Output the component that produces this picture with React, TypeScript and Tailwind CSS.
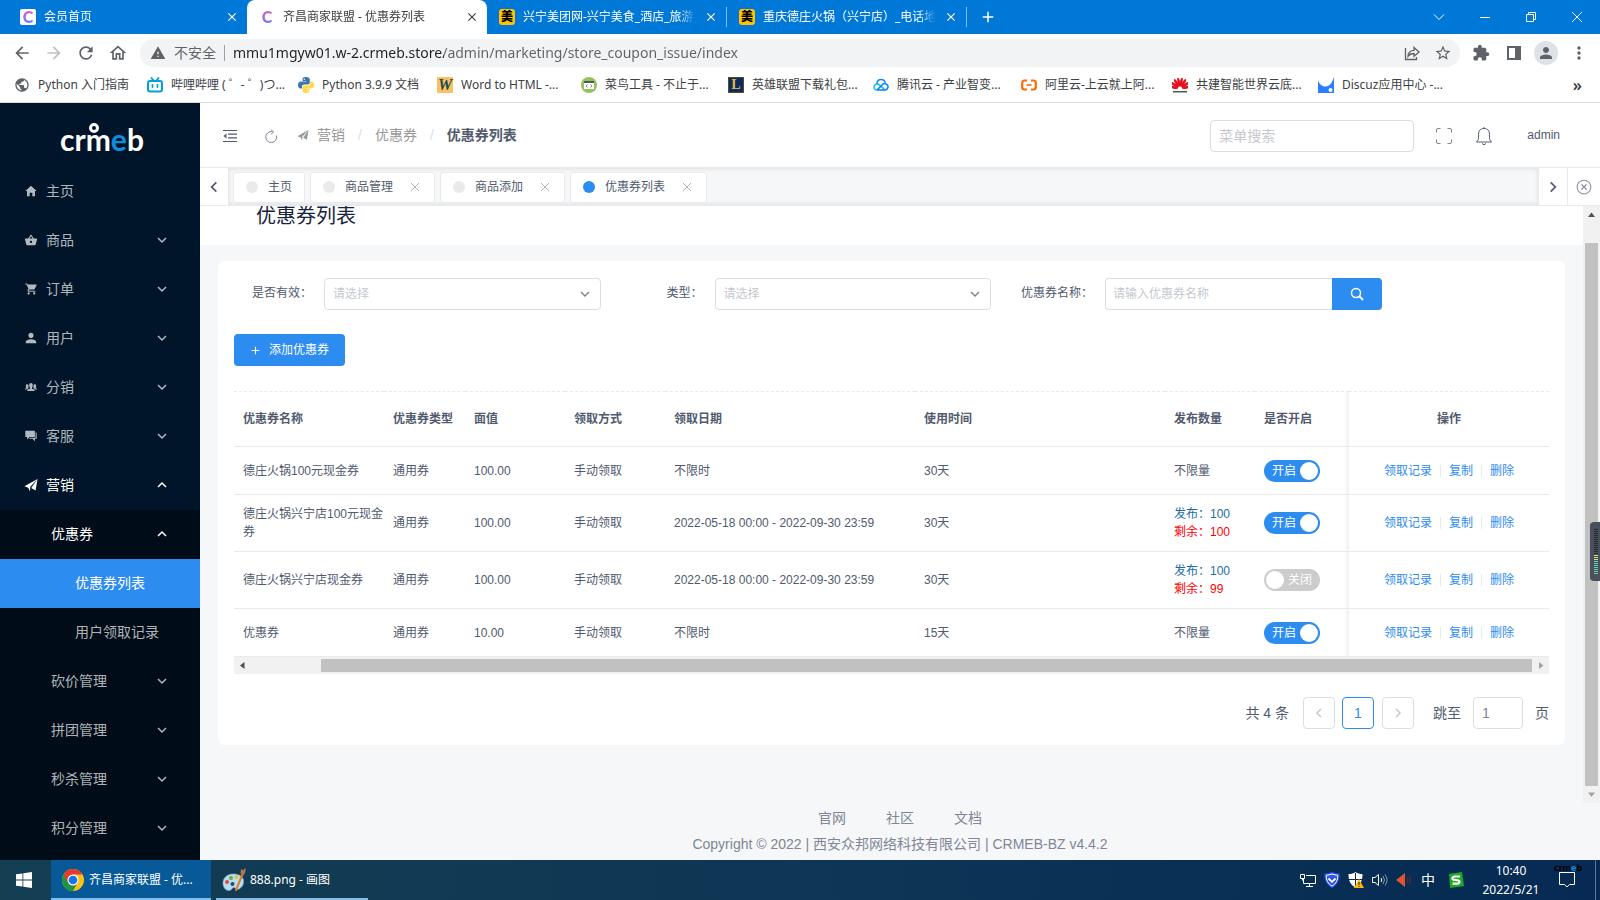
import { ReactNode, useState } from "react";
import {
  IoIosCloseCircleOutline,
  IoIosPeople,
  IoMdBasket,
  IoMdCart,
  IoMdHome,
  IoMdPerson,
  IoMdChatboxes,
} from "react-icons/io";
import {
  MdArrowBack,
  MdArrowForward,
  MdClose,
  MdExtension,
  MdMoreVert,
  MdOutlineHome,
  MdPerson,
  MdPublic,
  MdRefresh,
  MdStarBorder,
  MdWarning,
  MdAdd,
} from "react-icons/md";

/* ---------- small drawings ---------- */

const chevrons = {
  down: "M2 4l4 4 4-4",
  up: "M2 8l4-4 4 4",
  left: "M8 2L4 6l4 4",
  right: "M4 2l4 4-4 4",
};

const Chevron = ({ dir, className = "size-3" }: { dir: keyof typeof chevrons; className?: string }) => (
  <svg viewBox="0 0 12 12" className={className} fill="none" stroke="currentColor" strokeWidth="1.500">
    <path d={chevrons[dir]} />
  </svg>
);

const PlaneIcon = ({ className }: { className?: string }) => (
  <svg viewBox="0 0 16 16" className={className} fill="currentColor">
    <path d="M.5 9.500L15.500 1 7 10.300v5.200l-2.200-4.300zM15.500 1l-2.300 13.300-5-2.800z" />
  </svg>
);

const MeituanIcon = () => (
  <span className="flex size-4 shrink-0 items-center justify-center rounded-[3px] bg-[#ffc300] text-xs leading-4 font-black text-black">
    美
  </span>
);

const CIcon = () => (
  <span className="flex size-4 shrink-0 items-center justify-center rounded-xs bg-white">
    <span className="bg-linear-to-b from-[#e052c8] to-[#3f7bff] bg-clip-text font-['Lato',sans-serif] text-base leading-4 font-black text-transparent">
      C
    </span>
  </span>
);

const BilibiliIcon = () => (
  <svg viewBox="0 0 16 16" className="size-4 shrink-0" fill="none" stroke="#00a1d6" strokeLinecap="round">
    <rect x="1" y="4" width="14" height="10.500" rx="2" strokeWidth="2" />
    <path d="M4.500 1l2 2.500M11.500 1l-2 2.500M5.500 8v2M10.500 8v2" strokeWidth="1.800" />
  </svg>
);

const PythonIcon = () => (
  <svg viewBox="0 0 16 16" className="size-4 shrink-0">
    <path
      d="M8 0C5 0 4.500 1.200 4.500 2.500V4H8.200v.6H3C1 4.600 0 6 0 8s1 3.500 2.500 3.500H4V9.700C4 8.200 5.200 7.500 6.500 7.500h3.300c1.200 0 2-.9 2-2v-3C11.800 1 10.500 0 8 0z"
      fill="#3b77a8"
    />
    <path
      d="M8 16c3 0 3.500-1.200 3.500-2.500V12H7.800v-.6H13c2 0 3-1.400 3-3.400s-1-3.500-2.500-3.500H12.300v1.800c0 1.500-1.200 2.200-2.500 2.200H6.500c-1.200 0-2 .9-2 2v3C4.500 15 5.500 16 8 16z"
      fill="#ffd845"
    />
    <circle cx="6.300" cy="2.200" r=".7" fill="#fff" />
    <circle cx="9.700" cy="13.800" r=".7" fill="#fff" />
  </svg>
);

const WordIcon = () => (
  <span className="flex size-4 shrink-0 items-center justify-center bg-[#fbc062] font-['Liberation_Serif',serif] text-base leading-4 font-bold text-[#1d4a54] italic">
    W
  </span>
);

const RunoobIcon = () => (
  <svg viewBox="0 0 16 16" className="size-4 shrink-0">
    <circle cx="8" cy="8" r="8" fill="#96c25b" />
    <rect x="3" y="4" width="10" height="8" fill="#fff" />
    <rect x="3" y="4" width="10" height="2" fill="#4b5a5e" />
    <path d="M6.500 7.500L5 9l1.500 1.500M9.500 7.500L11 9l-1.500 1.500" stroke="#667" strokeWidth=".8" fill="none" />
  </svg>
);

const LolIcon = () => (
  <span className="flex size-4 shrink-0 items-center justify-center border border-[#5a4a25] bg-[#0b2c5f] font-['Liberation_Serif',serif] text-sm leading-4 font-bold text-[#e6b73c]">
    L
  </span>
);

const TencentIcon = () => (
  <svg viewBox="0 0 16 16" className="size-4 shrink-0" fill="none" strokeWidth="1.500">
    <path d="M4 13a3 3 0 1 1 .8-5.900c.8.2 1.400.7 2.300 1.500l5 4.400" stroke="#00c8dc" />
    <path d="M3.800 7C4 4.300 6 2.500 8.200 2.500c2 0 3.700 1.300 4.200 3.300" stroke="#0a8bff" />
    <path d="M4 13h8a3.200 3.200 0 1 0-2.600-5.300L4 13" stroke="#0a7bff" />
  </svg>
);

const AliyunIcon = () => (
  <svg viewBox="0 0 16 16" className="size-4 shrink-0" fill="none" stroke="#ff6a00" strokeWidth="2.200">
    <path d="M6 3.500H3.500Q1.200 3.500 1.200 6v4q0 2.500 2.300 2.500H6M10 3.500h2.500q2.300 0 2.300 2.500v4q0 2.500-2.300 2.500H10" />
    <path d="M5.500 8h5" strokeWidth="1.600" />
  </svg>
);

const HuaweiIcon = () => (
  <svg viewBox="0 0 16 16" className="size-4 shrink-0" fill="#e60f1e">
    {[-80, -56, -32, -11, 11, 32, 56, 80].map((a) => (
      <ellipse key={a} cx="8" cy="5" rx="1.300" ry="4.500" transform={`rotate(${a} 8 11.500)`} />
    ))}
    <rect x="1" y="14" width="14" height="1.500" fill="#555" />
  </svg>
);

const DiscuzIcon = () => (
  <svg viewBox="0 0 16 16" className="size-4 shrink-0">
    <path d="M0 3c1 4 4 6.500 7.500 6.500C12 9.500 14.500 5 16 0v16H0z" fill="#2a7fff" />
    <circle cx="12.500" cy="13" r="2" fill="#fff" />
  </svg>
);

const ChromeIcon = () => (
  <svg viewBox="0 0 48 48" className="size-[22px] shrink-0">
    <circle cx="24" cy="24" r="24" fill="#fbc116" />
    <path d="M24 24L3.200 12A24 24 0 0 0 24 48l10-18z" fill="#229342" />
    <path d="M24 12h20.800A24 24 0 0 0 3.200 12l10.400 18z" fill="#e33b2e" />
    <circle cx="24" cy="24" r="12" fill="#fff" />
    <circle cx="24" cy="24" r="9.500" fill="#1a73e8" />
  </svg>
);

const PaintIcon = () => (
  <svg viewBox="0 0 24 24" className="size-6 shrink-0">
    <path
      d="M11 6C5 6 1 10 1 15s3 7.500 6 7.500 2.500-2.500 4.500-3S14 22.500 17 21c3-1.500 5-4.500 4.500-8.500C21 8.500 17 6 11 6z"
      fill="#b9dcf0"
      stroke="#7fb2d2"
      strokeWidth=".6"
    />
    <circle cx="5" cy="14" r="2" fill="#e2493b" />
    <circle cx="9" cy="10" r="2" fill="#5cb346" />
    <circle cx="14.500" cy="9" r="2" fill="#f3b93a" />
    <circle cx="10.500" cy="16" r="2" fill="#1d4c74" />
    <path d="M14 22L21 5" stroke="#e07c26" strokeWidth="2" strokeLinecap="round" />
    <path d="M18.500 5.500L19 1l2 1.200L24 0l-1 5-2 2.500z" fill="#a97a55" />
  </svg>
);

const Logo = () => (
  <span className="relative font-['Lato',sans-serif] text-[30px] leading-8 font-bold text-white">
    crm<span className="text-[#0c8fe0]">e</span>b
    <span className="absolute top-0 left-[29px] size-[10px] rounded-full border-[3px] border-white" />
  </span>
);

/* ---------- browser ---------- */

const Tab = ({ icon, title, active }: { icon: ReactNode; title: string; active?: boolean }) => (
  <div
    className={`flex h-full shrink-0 items-center gap-2 pr-2 pl-3 ${
      active ? "w-60 rounded-t-lg bg-white text-[#3c4043]" : "w-[239px] text-white"
    }`}
  >
    {icon}
    <span className="min-w-0 flex-1 overflow-hidden mask-r-from-90% text-xs whitespace-nowrap">{title}</span>
    <button aria-label="关闭标签页">
      <MdClose className="size-[14px]" />
    </button>
  </div>
);

const bookmarks = [
  { icon: <MdPublic className="size-4 shrink-0 text-[#5f6368]" />, text: "Python 入门指南", w: "w-[133px]" },
  { icon: <BilibiliIcon />, text: "哔哩哔哩 ( ゜- ゜)つ...", w: "w-[151px]" },
  { icon: <PythonIcon />, text: "Python 3.9.9 文档", w: "w-[139px]" },
  { icon: <WordIcon />, text: "Word to HTML -...", w: "w-[144px]" },
  { icon: <RunoobIcon />, text: "菜鸟工具 - 不止于...", w: "w-[147px]" },
  { icon: <LolIcon />, text: "英雄联盟下载礼包...", w: "w-[145px]" },
  { icon: <TencentIcon />, text: "腾讯云 - 产业智变...", w: "w-[148px]" },
  { icon: <AliyunIcon />, text: "阿里云-上云就上阿...", w: "w-[151px]" },
  { icon: <HuaweiIcon />, text: "共建智能世界云底...", w: "w-[146px]" },
  { icon: <DiscuzIcon />, text: "Discuz应用中心 -...", w: "w-[140px]" },
];

const Browser = () => (
  <div className="shrink-0 border-b border-[#dadce0] bg-white font-['Noto_Sans','Noto_Sans_CJK_SC',sans-serif]">
    <div className="flex h-[34px] items-center bg-[#0078d7] pl-2">
      <Tab icon={<CIcon />} title="会员首页" />
      <Tab icon={<CIcon />} title="齐昌商家联盟 - 优惠券列表" active />
      <Tab icon={<MeituanIcon />} title="兴宁美团网-兴宁美食_酒店_旅游_" />
      <span className="h-5 w-px bg-[#7fbbeb]" />
      <Tab icon={<MeituanIcon />} title="重庆德庄火锅（兴宁店）_电话地" />
      <span className="h-5 w-px bg-[#7fbbeb]" />
      <button aria-label="新标签页" className="ml-3 text-white">
        <MdAdd className="size-[18px]" />
      </button>
      <div className="ml-auto flex text-white">
        <button aria-label="搜索标签页" className="flex w-[46px] justify-center">
          <svg viewBox="0 0 12 12" className="size-3" fill="none" stroke="currentColor">
            <path d="M1 3.500l5 5 5-5" />
          </svg>
        </button>
        <button aria-label="最小化" className="flex w-[46px] justify-center">
          <svg viewBox="0 0 12 12" className="size-3" fill="none" stroke="currentColor">
            <path d="M1 6.500h10" />
          </svg>
        </button>
        <button aria-label="还原" className="flex w-[46px] justify-center">
          <svg viewBox="0 0 12 12" className="size-3" fill="none" stroke="currentColor">
            <path d="M1.500 3.500h7v7h-7zM3.500 3.500v-2h7v7h-2" />
          </svg>
        </button>
        <button aria-label="关闭" className="flex w-[46px] justify-center">
          <svg viewBox="0 0 12 12" className="size-3" fill="none" stroke="currentColor">
            <path d="M1 1l10 10M11 1L1 11" />
          </svg>
        </button>
      </div>
    </div>
    <div className="flex h-[34px] items-center pt-[3px] pl-3 text-[#5f6368]">
      <button aria-label="后退" className="w-8">
        <MdArrowBack className="size-5" />
      </button>
      <button aria-label="前进" className="w-8 text-[#bdc1c6]">
        <MdArrowForward className="size-5" />
      </button>
      <button aria-label="刷新" className="w-8">
        <MdRefresh className="size-5" />
      </button>
      <button aria-label="主页" className="w-8">
        <MdOutlineHome className="size-5" />
      </button>
      <div className="flex h-7 flex-1 items-center rounded-full bg-[#f1f3f4] pr-2 pl-[10px] text-sm">
        <MdWarning className="size-4 shrink-0" />
        <span className="ml-2">不安全</span>
        <span className="mx-2 h-4 w-px bg-[#9aa0a6]" />
        <input
          aria-label="地址栏"
          className="min-w-0 flex-1 bg-[linear-gradient(90deg,#202124_211px,#5f6368_211px)] bg-clip-text text-sm text-transparent outline-none"
          defaultValue="mmu1mgyw01.w-2.crmeb.store/admin/marketing/store_coupon_issue/index"
        />
        <button aria-label="分享">
          <svg viewBox="0 0 16 16" className="size-4" fill="none" stroke="currentColor" strokeWidth="1.300">
            <path d="M1.500 3v11.500h11V12" />
            <path d="M4 11.500C4.300 7.500 6.500 5.300 10 5.300V2.500L15 7l-5 4.300V8.500C7.500 8.500 5.500 9.300 4 11.500z" />
          </svg>
        </button>
        <button aria-label="添加书签" className="ml-[14px]">
          <MdStarBorder className="size-[18px]" />
        </button>
      </div>
      <button aria-label="扩展程序" className="ml-3">
        <MdExtension className="size-[18px]" />
      </button>
      <button aria-label="侧边栏" className="ml-4">
        <svg viewBox="0 0 16 16" className="size-4">
          <path d="M1 1h14v14H1zM3 3v10h6V3z" fill="currentColor" fillRule="evenodd" />
        </svg>
      </button>
      <button aria-label="用户" className="ml-3 flex size-6 items-center justify-center rounded-full bg-[#dee1e6]">
        <MdPerson className="size-[18px]" />
      </button>
      <button aria-label="更多" className="mx-[11px]">
        <MdMoreVert className="size-5" />
      </button>
    </div>
    <div className="flex h-[34px] items-center pl-[14px] text-xs text-[#3c4043]">
      {bookmarks.map((b) => (
        <a key={b.text} href="#" className={`flex shrink-0 items-center gap-2 whitespace-nowrap ${b.w}`}>
          {b.icon}
          {b.text}
        </a>
      ))}
      <button className="mr-[18px] ml-auto text-base leading-5 font-semibold">»</button>
    </div>
  </div>
);

/* ---------- admin side menu ---------- */

const menus = [
  { icon: IoMdHome, title: "主页", leaf: true },
  { icon: IoMdBasket, title: "商品" },
  { icon: IoMdCart, title: "订单" },
  { icon: IoMdPerson, title: "用户" },
  { icon: IoIosPeople, title: "分销" },
  { icon: IoMdChatboxes, title: "客服" },
  { icon: PlaneIcon, title: "营销", open: true },
];

const Sidebar = () => (
  <nav className="flex w-[200px] shrink-0 flex-col overflow-hidden bg-[#001529] text-sm text-white/70">
    <div className="flex h-16 shrink-0 items-center justify-center pt-2 pl-1">
      <Logo />
    </div>
    {menus.map((m) => (
      <a
        key={m.title}
        href="#"
        className={`flex h-[49px] shrink-0 items-center pr-8 pb-[2px] pl-6 ${m.open ? "text-white" : ""}`}
      >
        <m.icon className="mr-2 size-[14px]" />
        <span className="flex-1">{m.title}</span>
        {!m.leaf && <Chevron dir={m.open ? "up" : "down"} />}
      </a>
    ))}
    <div className="flex-1 bg-[#000c17]">
      <a href="#" className="flex h-[49px] items-center pr-8 pb-[2px] pl-[51px] text-white">
        <span className="flex-1">优惠券</span>
        <Chevron dir="up" />
      </a>
      <a href="#" className="flex h-[49px] items-center bg-[#2d8cf0] pb-[2px] pl-[75px] text-white">
        优惠券列表
      </a>
      <a href="#" className="flex h-[49px] items-center pb-[2px] pl-[75px]">
        用户领取记录
      </a>
      {["砍价管理", "拼团管理", "秒杀管理", "积分管理"].map((t) => (
        <a key={t} href="#" className="flex h-[49px] items-center pr-8 pb-[2px] pl-[51px]">
          <span className="flex-1">{t}</span>
          <Chevron dir="down" />
        </a>
      ))}
    </div>
  </nav>
);

/* ---------- admin header ---------- */

const Header = () => (
  <header className="flex h-[65px] shrink-0 items-center border-b border-[#e8eaec] bg-white pt-[2px] text-sm text-[#515a6e]">
    <button aria-label="收起菜单" className="ml-[23px]">
      <svg viewBox="0 0 14 12" className="h-3 w-[14px]" fill="none" stroke="currentColor">
        <path d="M0 .5h14M5 4.200h9M5 7.800h9M0 11.500h14" strokeWidth="1.200" />
        <path d="M3.500 3.500v5L.5 6z" fill="currentColor" stroke="none" />
      </svg>
    </button>
    <button aria-label="刷新页面" className="ml-[27px]">
      <svg viewBox="0 0 14 14" className="size-[14px]" fill="none" stroke="#808695">
        <path d="M12.500 6.500A5.500 5.500 0 1 1 8.500 2.700" />
        <path d="M7 .5L9.500 3 7 5.500" />
      </svg>
    </button>
    <nav className="ml-[19px] flex items-center pb-[2px] text-[#999]">
      <PlaneIcon className="mr-2 size-3" />
      <a href="#">营销</a>
      <span className="mx-[13px] text-[#dcdee2]">/</span>
      <a href="#">优惠券</a>
      <span className="mx-[13px] text-[#dcdee2]">/</span>
      <span className="font-bold text-[#515a6e]">优惠券列表</span>
    </nav>
    <input
      aria-label="菜单搜索"
      placeholder="菜单搜索"
      className="ml-auto h-8 w-[204px] rounded border border-[#dcdee2] px-2 outline-none placeholder:text-[#c5c8ce]"
    />
    <button aria-label="全屏" className="ml-[21px]">
      <svg viewBox="0 0 18 18" className="size-[18px]" fill="none" stroke="#808695">
        <path d="M1.500 5.500V3q0-1.500 1.500-1.500h2.500M12.500 1.500H15q1.500 0 1.500 1.500v2.500M16.500 12.500V15q0 1.500-1.500 1.500h-2.500M5.500 16.500H3q-1.500 0-1.500-1.500v-2.500" />
      </svg>
    </button>
    <button aria-label="通知" className="ml-[22px]">
      <svg viewBox="0 0 18 20" className="h-5 w-[18px]" fill="none" stroke="currentColor">
        <path d="M1.500 16h15c-1.500-1.500-2-2.500-2-4.500V8.500c0-4-2-6-5.500-6s-5.500 2-5.500 6v3c0 2-.5 3-2 4.500zM7 17.500q2 2.500 4 0M9 2.500V1" />
      </svg>
    </button>
    <a href="#" className="mr-10 ml-[34px] pb-[2px] text-xs">
      admin
    </a>
  </header>
);

const pages = [
  { title: "主页", fixed: true },
  { title: "商品管理" },
  { title: "商品添加" },
  { title: "优惠券列表", active: true },
];

const PageTabs = () => (
  <div className="flex h-[38px] shrink-0 border-b border-[#e8eaec] bg-white text-xs text-[#515a6e]">
    <button aria-label="向左" className="flex w-7 items-center justify-center">
      <Chevron dir="left" className="size-[14px]" />
    </button>
    <div className="flex min-w-0 flex-1 items-center gap-[5px] bg-[#f5f7f9] px-[5px] pt-px shadow-[inset_0_0_3px_2px_rgba(100,100,100,0.1)]">
      {pages.map((p) => (
        <div
          key={p.title}
          className={`flex h-[31px] items-center rounded-[3px] border border-[#e8eaec] bg-white pl-3 ${p.fixed ? "pr-3" : "pr-[9px]"}`}
        >
          <span className={`mr-[10px] size-3 rounded-full ${p.active ? "bg-[#2d8cf0]" : "bg-[#e8eaec]"}`} />
          <a href="#">{p.title}</a>
          {!p.fixed && (
            <button aria-label={`关闭${p.title}`} className="ml-3 flex size-5 items-center justify-center">
              <svg viewBox="0 0 10 10" className="size-[10px]" stroke="#b0b3b9">
                <path d="M1 1l8 8M9 1L1 9" />
              </svg>
            </button>
          )}
        </div>
      ))}
    </div>
    <button aria-label="向右" className="flex w-7 items-center justify-center">
      <Chevron dir="right" className="size-[14px]" />
    </button>
    <button aria-label="关闭页签" className="flex w-[33px] items-center justify-center border-l border-[#e8eaec] text-[#808695]">
      <IoIosCloseCircleOutline className="size-[18px]" />
    </button>
  </div>
);

/* ---------- coupon list ---------- */

const Select = ({ id }: { id: string }) => (
  <div className="relative flex-1">
    <select
      id={id}
      className="block h-8 w-full appearance-none rounded border border-[#dcdee2] bg-white px-2 text-xs text-[#c5c8ce] outline-none"
    >
      <option>请选择</option>
    </select>
    <Chevron dir="down" className="pointer-events-none absolute top-[10px] right-[10px] size-3 text-[#808695]" />
  </div>
);

const Switch = ({ name, defaultOn }: { name: string; defaultOn: boolean }) => {
  const [on, setOn] = useState(defaultOn);
  return (
    <label className="relative block h-[22px] w-14 cursor-pointer text-xs leading-[22px] text-white">
      <input
        type="checkbox"
        aria-label={name}
        checked={on}
        onChange={() => setOn(!on)}
        className="block h-full w-full appearance-none rounded-full bg-[#ccc] checked:bg-[#2d8cf0]"
      />
      <span className={`absolute top-0 ${on ? "left-2" : "right-2"}`}>{on ? "开启" : "关闭"}</span>
      <span className={`absolute top-[2px] size-[18px] rounded-full bg-white ${on ? "right-[2px]" : "left-[2px]"}`} />
    </label>
  );
};

const coupons = [
  { name: "德庄火锅100元现金券", price: "100.00", date: "不限时", use: "30天", total: 0, left: 0, on: true },
  {
    name: "德庄火锅兴宁店100元现金券",
    price: "100.00",
    date: "2022-05-18 00:00 - 2022-09-30 23:59",
    use: "30天",
    total: 100,
    left: 100,
    on: true,
  },
  {
    name: "德庄火锅兴宁店现金券",
    price: "100.00",
    date: "2022-05-18 00:00 - 2022-09-30 23:59",
    use: "30天",
    total: 100,
    left: 99,
    on: false,
  },
  { name: "优惠券", price: "10.00", date: "不限时", use: "15天", total: 0, left: 0, on: true },
];

const CouponTable = () => (
  <table className="w-full table-fixed border-t border-dashed border-[#e8eaec] text-left text-xs leading-[18px]">
    <colgroup>
      <col className="w-[150px]" />
      <col className="w-[81px]" />
      <col className="w-[100px]" />
      <col className="w-[100px]" />
      <col className="w-[250px]" />
      <col />
      <col className="w-[90px]" />
      <col className="w-[94px]" />
      <col className="w-[200px]" />
    </colgroup>
    <thead>
      <tr className="h-[55px] border-b border-solid border-[#e8eaec]">
        {["优惠券名称", "优惠券类型", "面值", "领取方式", "领取日期", "使用时间", "发布数量"].map((h) => (
          <th key={h} className="pl-[9px] font-bold">
            {h}
          </th>
        ))}
        <th className="bg-[linear-gradient(to_left,#efefef,#fff_5px)] pl-[9px] font-bold">是否开启</th>
        <th className="text-center font-bold">操作</th>
      </tr>
    </thead>
    <tbody>
      {coupons.map((c) => (
        <tr key={c.name} className="h-12 border-b border-solid border-[#e8eaec]">
          <td className="pl-[9px]">{c.name}</td>
          <td className="pl-[9px]">通用券</td>
          <td className="pl-[9px]">{c.price}</td>
          <td className="pl-[9px]">手动领取</td>
          <td className="pl-[9px]">{c.date}</td>
          <td className="pl-[9px]">{c.use}</td>
          <td className="pl-[9px]">
            {c.total ? (
              <div className="py-[10px]">
                <div className="text-[#1c6ba5]">发布：{c.total}</div>
                <div className="text-[#f00]">剩余：{c.left}</div>
              </div>
            ) : (
              "不限量"
            )}
          </td>
          <td className="bg-[linear-gradient(to_left,#efefef,#fff_5px)] pl-[9px]">
            <Switch name={c.name} defaultOn={c.on} />
          </td>
          <td>
            <div className="flex items-center justify-center gap-2 text-[#2d8cf0]">
              <a href="#">领取记录</a>
              <span className="h-3 w-px bg-[#e8eaec]" />
              <a href="#">复制</a>
              <span className="h-3 w-px bg-[#e8eaec]" />
              <a href="#">删除</a>
            </div>
          </td>
        </tr>
      ))}
    </tbody>
  </table>
);

const Pagination = () => (
  <div className="mt-[23px] flex items-center justify-end text-sm">
    <span className="mr-[14px]">共 4 条</span>
    <button
      aria-label="上一页"
      className="mr-[7px] flex size-8 items-center justify-center rounded border border-[#dcdee2] text-[#c5c8ce]"
    >
      <Chevron dir="left" />
    </button>
    <button className="mr-2 flex size-8 items-center justify-center rounded border border-[#2d8cf0] text-[#2d8cf0]">
      1
    </button>
    <button
      aria-label="下一页"
      className="flex size-8 items-center justify-center rounded border border-[#dcdee2] text-[#c5c8ce]"
    >
      <Chevron dir="right" />
    </button>
    <label htmlFor="jump" className="mr-3 ml-[19px]">
      跳至
    </label>
    <input
      id="jump"
      defaultValue="1"
      className="mr-3 h-8 w-[50px] rounded border border-[#dcdee2] px-2 text-[#808695] outline-none"
    />
    页
  </div>
);

const CouponPage = () => (
  <main className="min-w-0 flex-1 overflow-hidden">
    <h1 className="h-[39px] bg-white pl-14 text-xl leading-5 text-[#17233d]">优惠券列表</h1>
    <section className="mx-[18px] mt-4 rounded-md bg-white p-4 pt-[17px]">
      <form className="-mx-3 flex text-xs" onSubmit={(e) => e.preventDefault()}>
        <div className="flex w-7/24 items-center px-3">
          <label htmlFor="valid" className="w-[90px] pr-3 pb-[2px] text-right">
            是否有效：
          </label>
          <Select id="valid" />
        </div>
        <div className="flex w-7/24 items-center px-3">
          <label htmlFor="type" className="w-[90px] pr-3 pb-[2px] text-right">
            类型：
          </label>
          <Select id="type" />
        </div>
        <div className="flex w-7/24 items-center px-3">
          <label htmlFor="name" className="w-[90px] pr-3 pb-[2px] text-right">
            优惠券名称：
          </label>
          <input
            id="name"
            placeholder="请输入优惠券名称"
            className="h-8 min-w-0 flex-1 rounded-l border border-r-0 border-[#dcdee2] px-[7px] outline-none placeholder:text-[#c5c8ce]"
          />
          <button aria-label="搜索" className="flex h-8 w-[50px] items-center justify-center rounded-r bg-[#2d8cf0] text-white">
            <svg viewBox="0 0 14 14" className="size-[14px]" fill="none" stroke="currentColor" strokeWidth="1.500">
              <circle cx="6" cy="6" r="4.500" />
              <path d="M9.300 9.300L13 13" strokeWidth="2" />
            </svg>
          </button>
        </div>
      </form>
      <button className="mt-6 mb-[25px] flex h-8 items-center rounded bg-[#2d8cf0] pr-4 pl-[15px] text-xs text-white">
        <MdAdd className="mr-[7px] size-[13px]" />
        添加优惠券
      </button>
      <CouponTable />
      <div className="flex h-[17px] items-center bg-[#f1f1f1]">
        <svg viewBox="0 0 17 17" className="size-[17px]">
          <path d="M10.500 5v7L6 8.500z" fill="#505050" />
        </svg>
        <div className="flex flex-1 justify-end">
          <div className="h-[13px] w-[94.5%] bg-[#c1c1c1]" />
        </div>
        <svg viewBox="0 0 17 17" className="size-[17px]">
          <path d="M7 5v7l4.500-3.500z" fill="#a3a3a3" />
        </svg>
      </div>
      <Pagination />
    </section>
  </main>
);

const Scrollbar = () => (
  <div className="flex w-[17px] flex-col items-center bg-[#f1f1f1]">
    <svg viewBox="0 0 17 17" className="size-[17px]">
      <path d="M5 11h7L8.500 6.500z" fill="#505050" />
    </svg>
    <div className="flex w-[13px] flex-1 flex-col justify-end">
      <div className="h-[96.5%] bg-[#c1c1c1]" />
    </div>
    <svg viewBox="0 0 17 17" className="size-[17px]">
      <path d="M5 6.500h7L8.500 11z" fill="#a3a3a3" />
    </svg>
  </div>
);

/* ---------- desktop ---------- */

const Taskbar = () => (
  <div className="flex h-10 shrink-0 items-stretch bg-linear-to-r from-[#143e52] via-[#0e3655] to-[#062a54] font-['Noto_Sans','Noto_Sans_CJK_SC',sans-serif] text-xs text-white">
    <button aria-label="开始" className="flex w-[51px] items-center pl-4">
      <svg viewBox="0 0 16 16" className="size-4" fill="currentColor">
        <path d="M0 2.300l6.500-.9v6.100H0zM7.300 1.300L16 0v7.500H7.300zM0 8.400h6.500v6.200L0 13.700zM7.300 8.400H16V16l-8.700-1.300z" />
      </svg>
    </button>
    <button className="flex w-40 items-center gap-[5px] border-b-2 border-[#83bdec] bg-[#075a97] pt-[2px] pl-[11px] whitespace-nowrap">
      <ChromeIcon />
      齐昌商家联盟 - 优...
    </button>
    <button className="ml-[5px] flex w-[152px] items-center gap-1 border-b-2 border-[#83bdec] pt-[2px] pl-[6px] whitespace-nowrap">
      <PaintIcon />
      888.png - 画图
    </button>
    <div className="ml-auto flex items-center gap-2">
      <svg viewBox="0 0 16 16" className="size-4" fill="none" stroke="currentColor">
        <path d="M6 3.500h9.500v8H3.500V7M9.500 11.500v3M6 14.500h7M.5 2.500h4v4h-4zM2.500 6.500v2" />
      </svg>
      <svg viewBox="0 0 16 16" className="size-4">
        <path d="M8 0c2.500 1 5 1.500 7.500 1.500C16 8 13 13.500 8 16 3 13.500 0 8 .5 1.500 3 1.500 5.500 1 8 0z" fill="#2f54eb" />
        <path d="M8 2c2 .8 4 1.200 5.700 1.200C14 8 12 12 8 14 4 12 2 8 2.300 3.200 4 3.200 6 2.800 8 2z" fill="none" stroke="#fff" />
        <path d="M4.500 6.500L8 9.800l3.500-3.300" fill="none" stroke="#fff" strokeWidth="1.800" />
      </svg>
      <svg viewBox="0 0 16 16" className="size-4">
        <path d="M7.500 0c2 1.500 4 2 7 2 0 6-1.500 10.500-7 13.500C2 12.500.5 8 .5 2c3 0 5-.5 7-2z" fill="#fff" />
        <path d="M7.500 1v14M1 7.500h13" stroke="#1b2a3a" />
        <path d="M11 7l5 9H6z" fill="#ffb900" />
        <path d="M11 10v3M11 14v1" stroke="#222" />
      </svg>
      <svg viewBox="0 0 16 16" className="size-4" fill="none" stroke="currentColor">
        <path d="M.5 5.500h2.500l3.500-3v11l-3.500-3H.5zM9 6q1.500 2 0 4" />
        <path d="M11 4q3 4 0 8M13 2.500q4 5.500 0 11" opacity=".5" />
      </svg>
      <svg viewBox="0 0 16 16" className="size-4">
        <path d="M0 8l9-7v14z" fill="#e0552f" />
        <path d="M11 5q2 3 0 6M13.500 3.500q2.500 4.500 0 9" fill="none" stroke="#5a2f35" />
      </svg>
      <span className="w-4 text-center text-sm">中</span>
      <svg viewBox="0 0 16 16" className="ml-1 size-4">
        <path d="M1 2L14 0l2 14-14 2z" fill="#1fa824" />
        <path d="M12 4.500H6.500Q4 5 4.500 7q.5 1 3.500 1t3.500 1.500q0 2-2.500 2.200H4.500" fill="none" stroke="#fff" strokeWidth="2.200" />
      </svg>
      <div className="mr-1 ml-[7px] w-16 text-center leading-[19px] whitespace-nowrap">
        10:40
        <br />
        2022/5/21
      </div>
      <button aria-label="通知中心" className="relative mr-2 w-6">
        <svg viewBox="0 0 16 16" className="mx-auto size-4" fill="none" stroke="currentColor">
          <path d="M.5.5h15v12h-5L8 15l-2.500-2.500h-5z" />
        </svg>
        <span className="absolute -top-[10px] -left-px font-['Lato',sans-serif] text-[10px] leading-[10px] font-black text-black">
          crm<span className="text-[#0c8fe0]">e</span>b
        </span>
      </button>
      <span className="mr-1 h-10 w-px bg-[#5d7896]" />
    </div>
  </div>
);

// level meter docked to the right edge of the screen
const LevelMeter = () => (
  <div className="absolute top-[522px] right-0 flex h-[59px] w-[10px] flex-col justify-center gap-px rounded-l bg-[#4a4f5c] pl-1">
    {Array.from({ length: 23 }, (_, i) => (
      <span key={i} className={`h-px w-1 ${i < 13 ? "bg-[#23262e]" : i < 16 ? "bg-[#c9e07a]" : "bg-[#5fd6a8]"}`} />
    ))}
  </div>
);

export default function App() {
  return (
    <div className="relative flex h-screen flex-col overflow-hidden bg-[#f5f7f9] font-['Liberation_Sans','Noto_Sans_CJK_SC',sans-serif] text-[#515a6e]">
      <Browser />
      <div className="flex min-h-0 flex-1">
        <Sidebar />
        <div className="flex min-w-0 flex-1 flex-col">
          <Header />
          <PageTabs />
          <div className="flex min-h-0 flex-1">
            <CouponPage />
            <Scrollbar />
          </div>
          <footer className="shrink-0 pt-[5px] pb-[6px] text-center text-sm leading-5 text-[#808695]">
            <div className="mb-[6px] flex justify-center gap-10">
              <a href="#">官网</a>
              <a href="#">社区</a>
              <a href="#">文档</a>
            </div>
            Copyright © 2022 | 西安众邦网络科技有限公司 | CRMEB-BZ v4.4.2
          </footer>
        </div>
      </div>
      <Taskbar />
      <LevelMeter />
    </div>
  );
}
